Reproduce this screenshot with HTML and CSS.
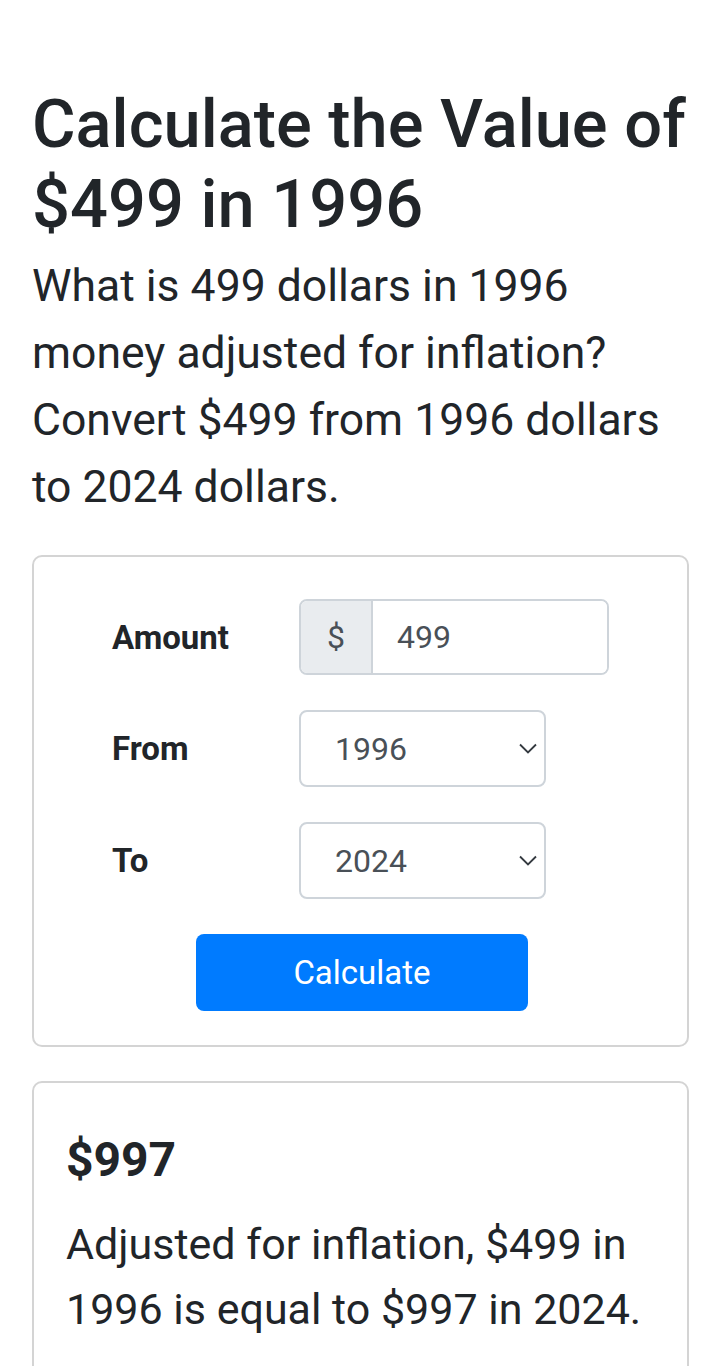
FILE: index.html
```html
<!DOCTYPE html>
<html lang="en">
<head>
    <meta charset="UTF-8">
    <meta name="viewport" content="width=device-width, initial-scale=1.0">
    <title>Calculate the Value of $499 in 1996</title>
    <link rel="stylesheet" href="styles.css">
</head>
<body>
    <div class="container">
        <h1>Calculate the Value of $499 in 1996</h1>
        <p class="lead">What is 499 dollars in 1996 money adjusted for inflation? Convert $499 from 1996 dollars to 2024 dollars.</p>

        <div class="card">
            <form class="calc-form" autocomplete="off">
                <div class="form-row">
                    <label for="amount">Amount</label>
                    <div class="input-group">
                        <span class="prepend">$</span>
                        <input type="text" id="amount" name="amount" value="499">
                    </div>
                </div>
                <div class="form-row">
                    <label for="from">From</label>
                    <div class="select-wrap">
                        <select id="from" name="from">
                            <option>1995</option>
                            <option selected>1996</option>
                            <option>1997</option>
                        </select>
                        <svg class="chevron" width="18" height="11" viewBox="0 0 18 11"><path d="M1 1.5l8 8 8-8" fill="none" stroke="#343a40" stroke-width="1.8"/></svg>
                    </div>
                </div>
                <div class="form-row">
                    <label for="to">To</label>
                    <div class="select-wrap">
                        <select id="to" name="to">
                            <option>2023</option>
                            <option selected>2024</option>
                        </select>
                        <svg class="chevron" width="18" height="11" viewBox="0 0 18 11"><path d="M1 1.5l8 8 8-8" fill="none" stroke="#343a40" stroke-width="1.8"/></svg>
                    </div>
                </div>
                <button type="button" class="calc-btn">Calculate</button>
            </form>
        </div>

        <div class="card result">
            <h3>$997</h3>
            <p>Adjusted for inflation, $499 in 1996 is equal to $997 in 2024.</p>
        </div>
    </div>
</body>
</html>
```

FILE: styles.css
```css
body {
    margin: 0;
    font-family: Roboto, "Liberation Sans", Arial, sans-serif;
    color: #212529;
    background-color: #fff;
}
.container {
    padding: 84px 31px 0 32px;
}
h1 {
    font-size: 66.8px;
    font-weight: 500;
    line-height: 80px;
    margin: 0 0 9px;
}
.lead {
    font-size: 44.5px;
    line-height: 67px;
    margin: 0 0 34px;
}
.card {
    border: 2px solid #d4d4d4;
    border-radius: 10px;
}
.calc-form {
    padding: 42px 0 34px 78px;
}
.form-row {
    display: grid;
    grid-template-columns: 187px auto;
    align-items: center;
    margin-bottom: 35px;
}
label {
    font-size: 33px;
    font-weight: bold;
}
.input-group {
    display: flex;
    width: 310px;
    height: 76px;
    box-sizing: border-box;
    border: 2px solid #ced4da;
    border-radius: 8px;
    overflow: hidden;
}
.prepend {
    display: flex;
    align-items: center;
    justify-content: center;
    width: 70px;
    background-color: #e9ecef;
    border-right: 2px solid #ced4da;
    font-size: 32px;
    color: #495057;
}
.input-group input {
    flex: 1;
    min-width: 0;
    border: none;
    padding: 0 24px;
    font-family: inherit;
    font-size: 32px;
    color: #495057;
    outline: none;
}
.select-wrap {
    position: relative;
    width: 247px;
}
select {
    appearance: none;
    -webkit-appearance: none;
    width: 100%;
    height: 77px;
    box-sizing: border-box;
    border: 2px solid #ced4da;
    border-radius: 8px;
    background: #fff;
    padding: 0 34px;
    font-family: inherit;
    font-size: 32px;
    color: #495057;
}
.chevron {
    position: absolute;
    right: 9px;
    top: 33px;
    pointer-events: none;
}
.calc-btn {
    display: block;
    width: 332px;
    height: 77px;
    margin-left: 84px;
    border: none;
    border-radius: 8px;
    background-color: #007bff;
    color: #fff;
    font-family: inherit;
    font-size: 33px;
    cursor: pointer;
}
.result {
    margin-top: 34px;
    padding: 47px 30px 60px 32px;
}
.result h3 {
    font-size: 48px;
    font-weight: bold;
    line-height: 60px;
    margin: 0 0 22px;
}
.result p {
    font-size: 43px;
    line-height: 65px;
    margin: 0;
}
```
